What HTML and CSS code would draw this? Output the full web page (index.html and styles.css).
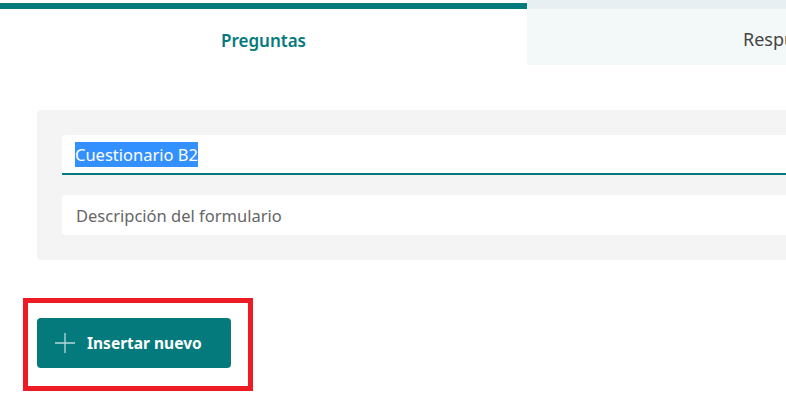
FILE: index.html
```html
<!DOCTYPE html>
<html>
    <head>
        <link rel="stylesheet" href="styles.css">
        <title>Cuestionario B2</title>
    </head>
    <body>
        <div class="tabs">
            <div class="tab active">Preguntas</div>
            <div class="tab other"><span class="tab-label">Respuestas</span></div>
        </div>
        <div class="main">
            <div class="card">
                <div class="field title">
                    <span class="selected">Cuestionario B2</span>
                </div>
                <div class="field desc">Descripción del formulario</div>
            </div>
            <div class="insert-wrap">
                <button class="insert">
                    <svg class="plus" width="20" height="20" viewBox="0 0 20 20">
                        <path d="M10 0 V20 M0 10 H20" stroke="#b9d9d9" stroke-width="1.3" fill="none"/>
                    </svg>
                    Insertar nuevo
                </button>
                <div class="highlight"></div>
            </div>
        </div>
    </body>
</html>
```

FILE: styles.css
```css
body {
    margin: 0;
    font-family: "Segoe UI", "Noto Sans", sans-serif;
    background-color: white;
    min-height: 100vh;
    overflow-x: hidden;
}
.tabs {
    display: flex;
    height: 65px;
}
.tab {
    box-sizing: border-box;
    display: flex;
    align-items: center;
    font-size: 17px;
}
.tab.active {
    width: 527px;
    flex-shrink: 0;
    margin-top: 3px;
    border-top: 6px solid #047a7c;
    justify-content: center;
    color: #047a7c;
    font-weight: 600;
    padding-top: 6px;
}
.tab.other {
    flex: 1;
    border-top: 9px solid #e7eff2;
    background-color: #f3f8f8;
    color: #444;
    font-size: 18px;
    padding-top: 3px;
    padding-left: 216px;
    white-space: nowrap;
    overflow: hidden;
}
.main {
    padding-left: 37px;
    padding-bottom: 40px;
}
.card {
    margin-top: 45px;
    background-color: #f4f4f4;
    border-radius: 4px 0 0 4px;
    padding: 25px 0 25px 25px;
    display: flex;
    flex-direction: column;
    gap: 20px;
}
.field {
    box-sizing: border-box;
    height: 40px;
    background-color: white;
    display: flex;
    align-items: center;
    padding-left: 13px;
}
.field.title {
    border-bottom: 2px solid #047a7c;
    border-radius: 4px 0 0 0;
    font-size: 16.5px;
}
.selected {
    background-color: #3390ff;
    color: white;
    line-height: 25px;
}
.field.desc {
    border-radius: 4px 0 0 4px;
    color: #666;
    font-size: 16.5px;
    padding-left: 14px;
}
.insert-wrap {
    position: relative;
    margin-top: 58px;
}
.insert {
    width: 194px;
    height: 50px;
    border: none;
    border-radius: 4px;
    background-color: #047a7c;
    color: white;
    font-family: inherit;
    font-size: 15.5px;
    font-weight: 700;
    display: flex;
    align-items: center;
    padding: 0 0 0 18px;
    gap: 12px;
    cursor: pointer;
}
.highlight {
    position: absolute;
    left: -14px;
    top: -20px;
    width: 220px;
    height: 83px;
    border: 5px solid #ed1c24;
}
```
